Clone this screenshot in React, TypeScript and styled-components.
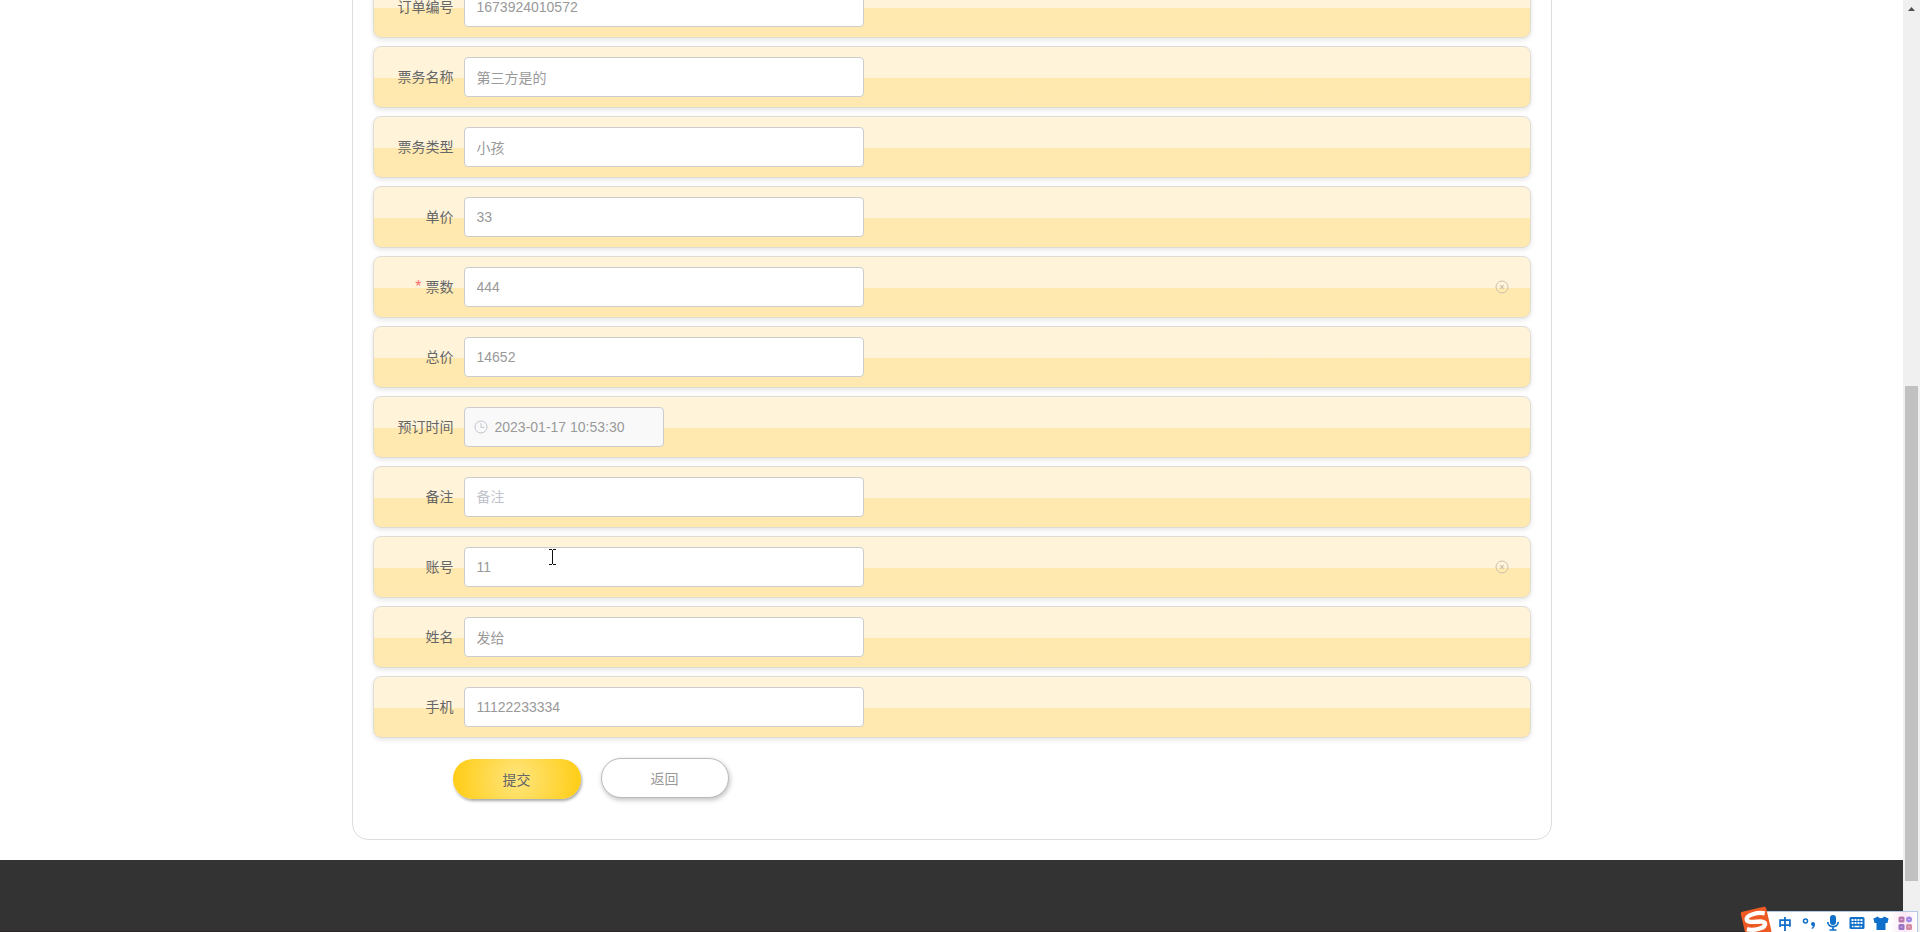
import React from 'react';
import styled, { createGlobalStyle, css } from 'styled-components';

const GlobalStyle = createGlobalStyle`
  *, *::before, *::after { box-sizing: border-box; }
  body { margin: 0; background: #fff; }
  body, input, button {
    font-family: "Liberation Sans", "Noto Sans CJK SC", sans-serif;
    font-size: 14px;
  }
`;

const Viewport = styled.div`
  display: flex;
  height: 100vh;
  overflow: hidden;
`;

const Page = styled.div`
  flex: 1;
  min-width: 0;
  display: flex;
  flex-direction: column;
  overflow: hidden;
`;

/* The form is scrolled: its head lies above the visible part of the page. */
const Panel = styled.form`
  width: 1200px;
  max-width: 100%;
  margin: -45px auto 20px;
  padding: 20px 20px 40px;
  border: 1px solid #ddd;
  border-radius: 16px;
  background: #fff;
`;

const Row = styled.div`
  display: flex;
  align-items: center;
  margin-bottom: 8px;
  padding: 10px;
  border: 1px solid #dfdcd6;
  border-radius: 8px;
  background: linear-gradient(180deg, #fff4da 0, #fff4da 52%, #ffe9af 52%, #ffe9b0 100%);
  box-shadow: 0 2px 5px rgba(0, 0, 0, 0.1);
`;

const Label = styled.label`
  flex: none;
  width: 80px;
  padding-right: 10px;
  line-height: 40px;
  text-align: right;
  color: #666;
`;

const Required = styled.span`
  margin-right: 4px;
  font-size: 16px;
  color: #f56c6c;
`;

const Field = styled.div`
  position: relative;
  flex: 1;
  display: flex;
  align-items: center;
`;

const TextInput = styled.input<{ $date?: boolean }>`
  width: ${p => (p.$date ? 200 : 400)}px;
  max-width: 100%;
  height: 40px;
  padding: 0 12px 0 ${p => (p.$date ? 30 : 12)}px;
  border: 1px solid #ccc;
  border-radius: 4px;
  outline: none;
  background: ${p => (p.$date ? '#f9f9fa' : '#fff')};
  color: #999;
  &::placeholder { color: #c0c4cc; }
`;

const PrefixIcon = styled.svg`
  position: absolute;
  left: 10px;
  width: 14px;
  height: 14px;
  color: #c0c4cc;
`;

const ClearButton = styled.button`
  display: flex;
  margin: 0 11px 0 auto;
  padding: 0;
  border: 0;
  background: none;
  color: #ccc0b0;
`;

const TextCursor = styled.svg`
  position: absolute;
  left: 84px;
  top: 2px;
  width: 9px;
  height: 16px;
`;

const Actions = styled.div`
  display: flex;
  align-items: flex-start;
  gap: 20px;
  padding: 12px 0 0 80px;
`;

const ActionButton = styled.button<{ $primary?: boolean }>`
  width: 128px;
  height: 40px;
  padding: 0;
  border-radius: 20px;
  ${p =>
    p.$primary
      ? css`
          margin-top: 1px;
          border: 0;
          background: radial-gradient(circle, #ffe57e 0%, #ffcc11 100%);
          box-shadow: 1px 2px 3px rgba(0, 0, 0, 0.35);
          color: #666;
        `
      : css`
          border: 1px solid #bbb;
          background: #fff;
          box-shadow: 1px 2px 5px rgba(0, 0, 0, 0.25);
          color: #999;
        `}
`;

const Footer = styled.footer`
  flex: 1;
  min-height: 72px;
  border-bottom: 1px solid #2b2527;
  background: #333;
`;

const Scrollbar = styled.div`
  flex: none;
  width: 17px;
  display: flex;
  flex-direction: column;
  padding: 0 2px;
  background: #f0f0f0;
`;

const ArrowUp = styled.svg`
  flex: none;
  width: 13px;
  height: 17px;
`;

const Track = styled.div`
  flex: 1;
  display: grid;
  grid-template-rows: 369fr 495fr 51fr;
`;

const Thumb = styled.div`
  grid-row: 2;
  background: #c1c1c1;
`;

const ImeBar = styled.div`
  position: fixed;
  right: 2px;
  bottom: 0;
  display: flex;
  align-items: center;
  height: 21px;
  padding: 2px 0 0 6px;
  border-top: 1px solid #b5c7e6;
  border-right: 1px solid #b5c7e6;
  background: linear-gradient(90deg, #fff 82%, #fbe6f5 92%, #fff 100%);
  color: #0f6fc9;
`;

const ImeLogo = styled.svg`
  position: absolute;
  left: -28px;
  bottom: -6px;
  width: 34px;
  height: 32px;
`;

const ImeItem = styled.span`
  width: 24px;
  display: flex;
  justify-content: center;
  font-family: "Noto Sans CJK SC", sans-serif;
  font-weight: 700;
  font-size: 14px;
  line-height: 16px;
  svg { display: block; width: 16px; height: 16px; }
`;

interface FieldData {
  id: string;
  label: string;
  value: string;
  placeholder?: string;
  required?: boolean;
  clearable?: boolean;
  date?: boolean;
  cursor?: boolean;
}

const fields: FieldData[] = [
  { id: 'order', label: '订单编号', value: '1673924010572' },
  { id: 'name', label: '票务名称', value: '第三方是的' },
  { id: 'type', label: '票务类型', value: '小孩' },
  { id: 'price', label: '单价', value: '33' },
  { id: 'count', label: '票数', value: '444', required: true, clearable: true },
  { id: 'total', label: '总价', value: '14652' },
  { id: 'time', label: '预订时间', value: '2023-01-17 10:53:30', date: true },
  { id: 'remark', label: '备注', value: '', placeholder: '备注' },
  { id: 'account', label: '账号', value: '11', clearable: true, cursor: true },
  { id: 'person', label: '姓名', value: '发给' },
  { id: 'phone', label: '手机', value: '11122233334' },
];

function FormRow({ field }: { field: FieldData }) {
  return (
    <Row>
      <Label htmlFor={field.id}>
        {field.required && <Required>*</Required>}
        {field.label}
      </Label>
      <Field>
        <TextInput
          id={field.id}
          type="text"
          $date={field.date}
          defaultValue={field.value}
          placeholder={field.placeholder}
          readOnly={field.date}
        />
        {field.date && (
          <PrefixIcon viewBox="0 0 14 14" fill="none" stroke="currentColor">
            <circle cx="7" cy="7" r="6" />
            <path d="M7 3.2V7.4H10.4" />
          </PrefixIcon>
        )}
        {field.clearable && (
          <ClearButton type="button" aria-label="清空">
            <svg width="14" height="14" viewBox="0 0 14 14" fill="none" stroke="currentColor">
              <circle cx="7" cy="7" r="6" />
              <path d="M5.2 5.2L8.8 8.8M8.8 5.2L5.2 8.8" strokeWidth="1.2" />
            </svg>
          </ClearButton>
        )}
        {field.cursor && (
          <TextCursor viewBox="0 0 9 16" fill="none" stroke="#111" shapeRendering="crispEdges">
            <path d="M1 .5H4M5 .5H8M4.5 1V15M1 15.5H4M5 15.5H8" />
          </TextCursor>
        )}
      </Field>
    </Row>
  );
}

function InputMethodBar() {
  return (
    <ImeBar>
      <ImeLogo viewBox="0 0 34 32">
        <g transform="rotate(-13 17 16)">
          <rect x="4" y="3" width="26" height="27" rx="2" fill="#ee5a24" />
          <path
            d="M27.5 9.5C21 6.5 8.5 7 8.5 11.8C8.5 17 25.5 14.5 25.5 19.5C25.5 24 13 24.5 6.5 21"
            fill="none"
            stroke="#fff"
            strokeWidth="4.4"
          />
        </g>
      </ImeLogo>
      <ImeItem>中</ImeItem>
      <ImeItem>
        <svg viewBox="0 0 16 16">
          <circle cx="4.5" cy="6" r="2" fill="none" stroke="currentColor" strokeWidth="1.5" />
          <path d="M10 9a2 2 0 0 1 4 0C14 11.5 13 13.1 11 14.1L10.4 13.1C11.4 12.5 11.9 11.8 12 11A2 2 0 0 1 10 9Z" fill="currentColor" />
        </svg>
      </ImeItem>
      <ImeItem>
        <svg viewBox="0 0 16 16">
          <rect x="5" y="0" width="6" height="10" rx="3" fill="currentColor" />
          <path d="M2.8 7C3 13.2 13 13.2 13.2 7M8 12V15M4.5 15H11.5" fill="none" stroke="currentColor" strokeWidth="1.7" />
        </svg>
      </ImeItem>
      <ImeItem>
        <svg viewBox="0 0 16 16">
          <rect x="0.5" y="2" width="15" height="12" rx="1.5" fill="currentColor" />
          <path d="M2.5 5H13.5M2.5 8H13.5" stroke="#fff" strokeWidth="2" strokeDasharray="2 1" />
          <path d="M3 11.5H4.5M5.5 11.5H10.5M11.5 11.5H13" stroke="#fff" strokeWidth="1.6" />
        </svg>
      </ImeItem>
      <ImeItem>
        <svg viewBox="0 0 16 16">
          <path d="M5 1.5C6 3.8 10 3.8 11 1.5L15.6 3.5L14.5 8H12.5V15H3.5V8H1.5L.4 3.5Z" fill="currentColor" />
        </svg>
      </ImeItem>
      <ImeItem>
        <svg viewBox="0 0 16 16">
          <rect x="1.5" y="1.5" width="6" height="6" rx="1.5" fill="#b878ae" />
          <rect x="9" y="1.5" width="6" height="6" rx="3" fill="#a08ae4" />
          <rect x="1.5" y="9" width="6" height="6" rx="1.5" fill="#9a74c4" />
          <rect x="9" y="9" width="6" height="6" rx="1.5" fill="#d58ba2" />
          <path d="M3.5 4.5H5.5M11 4.5H13M3.5 12H5.5M11 12H13" stroke="#d9b4dc" />
        </svg>
      </ImeItem>
    </ImeBar>
  );
}

export default function App() {
  return (
    <>
      <GlobalStyle />
      <Viewport>
        <Page>
          <Panel onSubmit={e => e.preventDefault()}>
            {fields.map(field => (
              <FormRow key={field.id} field={field} />
            ))}
            <Actions>
              <ActionButton type="submit" $primary>
                提交
              </ActionButton>
              <ActionButton type="button">返回</ActionButton>
            </Actions>
          </Panel>
          <Footer />
        </Page>
        <Scrollbar>
          <ArrowUp viewBox="0 0 13 17">
            <path d="M3 11L6.5 7L10 11Z" fill="#505050" />
          </ArrowUp>
          <Track>
            <Thumb />
          </Track>
        </Scrollbar>
      </Viewport>
      <InputMethodBar />
    </>
  );
}
